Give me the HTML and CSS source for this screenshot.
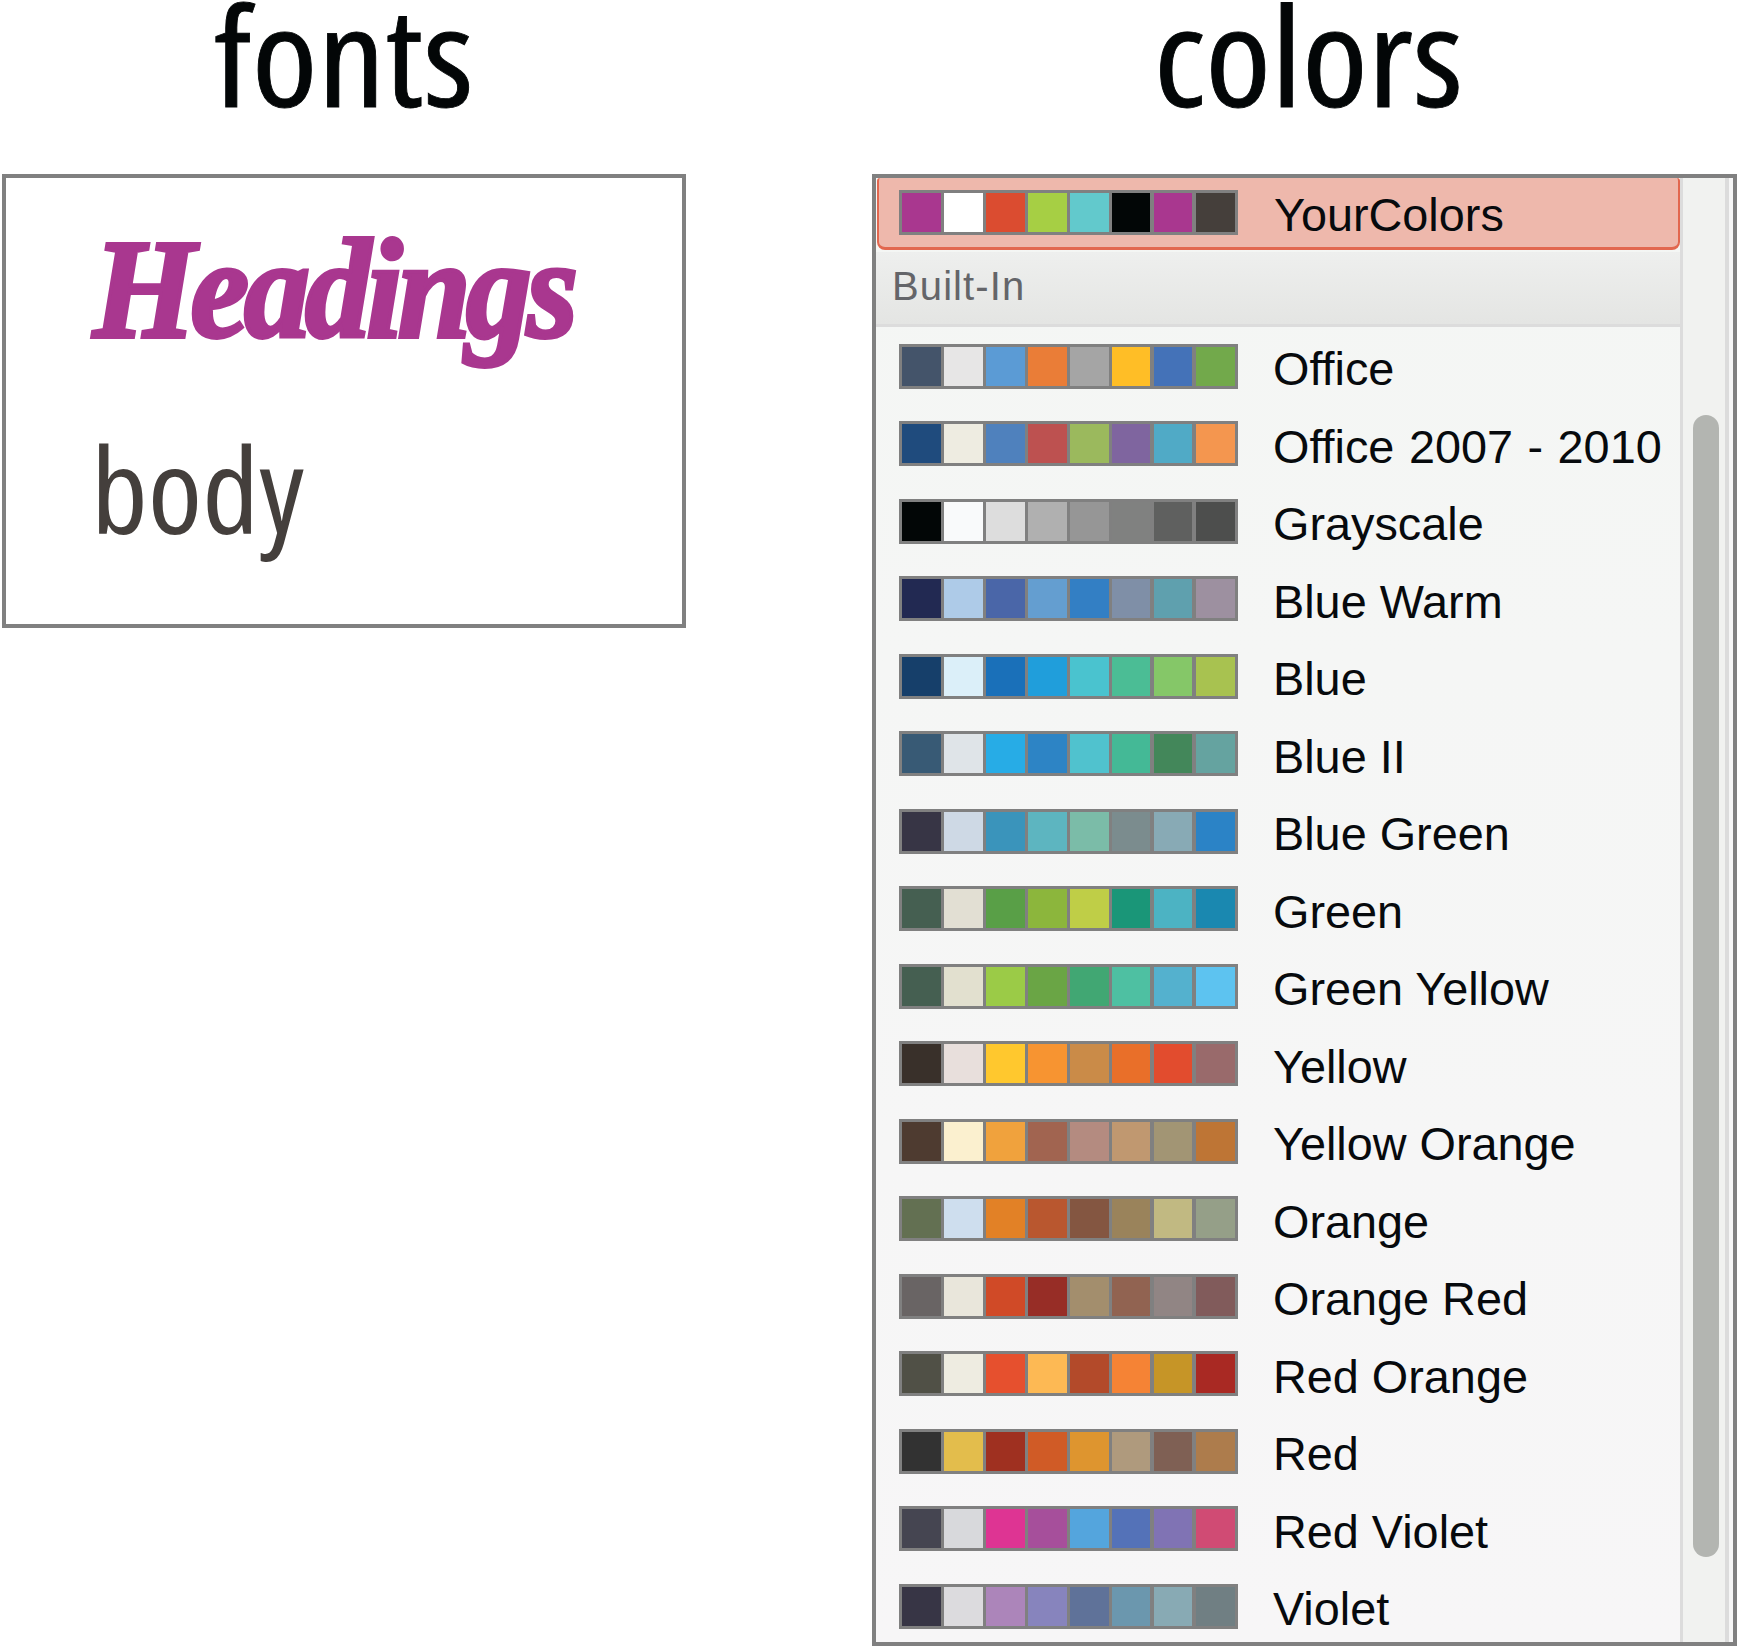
FILE: index.html
```html
<!DOCTYPE html>
<html lang="en">
<head>
<meta charset="utf-8">
<title>fonts and colors</title>
<link rel="stylesheet" href="styles.css">
</head>
<body>
<main class="page">
  <section class="col col-fonts">
    <h1 class="title title-fonts">fonts</h1>
    <div class="font-box">
      <div class="sample-head">Headings</div>
      <div class="sample-body">body</div>
    </div>
  </section>
  <section class="col col-colors">
    <div class="title-wrap"><h1 class="title title-colors">colors</h1></div>
    <div class="panel">
      <div class="list">
        <div class="row row-selected"><div class="strip"><i style="background:#a9378f"></i><i style="background:#ffffff"></i><i style="background:#db4c30"></i><i style="background:#a6cf44"></i><i style="background:#62c9cc"></i><i style="background:#020606"></i><i style="background:#a9378f"></i><i style="background:#453f3b"></i></div><span class="label">YourColors</span></div>
        <div class="group">Built-In</div>
        <div class="row"><div class="strip"><i style="background:#44546a"></i><i style="background:#e7e6e6"></i><i style="background:#5b9bd5"></i><i style="background:#ea7d37"></i><i style="background:#a5a5a5"></i><i style="background:#ffbe26"></i><i style="background:#4472b8"></i><i style="background:#72a94b"></i></div><span class="label">Office</span></div>
        <div class="row"><div class="strip"><i style="background:#1f4b7d"></i><i style="background:#eeece1"></i><i style="background:#4f81bd"></i><i style="background:#bd5150"></i><i style="background:#9bb95d"></i><i style="background:#7f659f"></i><i style="background:#50aac6"></i><i style="background:#f4964f"></i></div><span class="label label-wide">Office 2007 - 2010</span></div>
        <div class="row"><div class="strip"><i style="background:#020606"></i><i style="background:#f9fafb"></i><i style="background:#dddddd"></i><i style="background:#b0b0b0"></i><i style="background:#969696"></i><i style="background:#808180"></i><i style="background:#5f605f"></i><i style="background:#4d4e4d"></i></div><span class="label">Grayscale</span></div>
        <div class="row"><div class="strip"><i style="background:#222952"></i><i style="background:#aecbe8"></i><i style="background:#4a66a8"></i><i style="background:#649ed0"></i><i style="background:#337fc4"></i><i style="background:#7f8fa7"></i><i style="background:#5fa0ae"></i><i style="background:#9d90a0"></i></div><span class="label">Blue Warm</span></div>
        <div class="row"><div class="strip"><i style="background:#163f6a"></i><i style="background:#dbeff9"></i><i style="background:#1a70b9"></i><i style="background:#209edb"></i><i style="background:#4ac3cf"></i><i style="background:#4bbd95"></i><i style="background:#85c768"></i><i style="background:#a8c250"></i></div><span class="label">Blue</span></div>
        <div class="row"><div class="strip"><i style="background:#385a75"></i><i style="background:#dfe4e8"></i><i style="background:#27ace6"></i><i style="background:#2d84c5"></i><i style="background:#50c2ce"></i><i style="background:#44b996"></i><i style="background:#43875a"></i><i style="background:#65a3a0"></i></div><span class="label">Blue II</span></div>
        <div class="row"><div class="strip"><i style="background:#373545"></i><i style="background:#ced9e5"></i><i style="background:#3a94bb"></i><i style="background:#5db5c0"></i><i style="background:#7bbca8"></i><i style="background:#7b8c8e"></i><i style="background:#88aab5"></i><i style="background:#2b83c6"></i></div><span class="label">Blue Green</span></div>
        <div class="row"><div class="strip"><i style="background:#455f51"></i><i style="background:#e2dfd3"></i><i style="background:#599f47"></i><i style="background:#8cb63c"></i><i style="background:#bfce47"></i><i style="background:#1a9678"></i><i style="background:#4cb3c3"></i><i style="background:#1a88b0"></i></div><span class="label">Green</span></div>
        <div class="row"><div class="strip"><i style="background:#455f51"></i><i style="background:#e2e0cf"></i><i style="background:#9bcb47"></i><i style="background:#6aa545"></i><i style="background:#41a773"></i><i style="background:#4ec0a2"></i><i style="background:#54b1ce"></i><i style="background:#5dc3f0"></i></div><span class="label">Green Yellow</span></div>
        <div class="row"><div class="strip"><i style="background:#39302a"></i><i style="background:#e8dfdc"></i><i style="background:#ffc82e"></i><i style="background:#f79431"></i><i style="background:#ca8b48"></i><i style="background:#e96f29"></i><i style="background:#e24c2e"></i><i style="background:#996a6b"></i></div><span class="label">Yellow</span></div>
        <div class="row"><div class="strip"><i style="background:#4e3b30"></i><i style="background:#fbf0cf"></i><i style="background:#f0a23d"></i><i style="background:#a16450"></i><i style="background:#b48b80"></i><i style="background:#c09870"></i><i style="background:#a29574"></i><i style="background:#be7535"></i></div><span class="label">Yellow Orange</span></div>
        <div class="row"><div class="strip"><i style="background:#637052"></i><i style="background:#cedeee"></i><i style="background:#e28126"></i><i style="background:#b9572f"></i><i style="background:#845641"></i><i style="background:#9a835b"></i><i style="background:#c1b982"></i><i style="background:#959f88"></i></div><span class="label">Orange</span></div>
        <div class="row"><div class="strip"><i style="background:#696464"></i><i style="background:#e9e6db"></i><i style="background:#d04a27"></i><i style="background:#972d26"></i><i style="background:#a38e6d"></i><i style="background:#916351"></i><i style="background:#918584"></i><i style="background:#815b5b"></i></div><span class="label">Orange Red</span></div>
        <div class="row"><div class="strip"><i style="background:#505046"></i><i style="background:#eeece1"></i><i style="background:#e6502e"></i><i style="background:#fdb954"></i><i style="background:#b34a2a"></i><i style="background:#f58335"></i><i style="background:#c69527"></i><i style="background:#a92923"></i></div><span class="label">Red Orange</span></div>
        <div class="row"><div class="strip"><i style="background:#323232"></i><i style="background:#e3bd4c"></i><i style="background:#9f3020"></i><i style="background:#d05b26"></i><i style="background:#de952f"></i><i style="background:#af9a7d"></i><i style="background:#7f6054"></i><i style="background:#ad7c4c"></i></div><span class="label">Red</span></div>
        <div class="row"><div class="strip"><i style="background:#454551"></i><i style="background:#d8d9dc"></i><i style="background:#de3493"></i><i style="background:#a64f9b"></i><i style="background:#54a5dd"></i><i style="background:#5472b8"></i><i style="background:#8073b4"></i><i style="background:#d04b74"></i></div><span class="label">Red Violet</span></div>
        <div class="row"><div class="strip"><i style="background:#373545"></i><i style="background:#dcdbde"></i><i style="background:#ac85ba"></i><i style="background:#8784bd"></i><i style="background:#5f7299"></i><i style="background:#6b97ae"></i><i style="background:#88aab4"></i><i style="background:#707f83"></i></div><span class="label">Violet</span></div>
      </div>
      <div class="scrollbar"><div class="thumb"></div></div>
    </div>
  </section>
</main>
</body>
</html>
```
FILE: styles.css
```css
* { box-sizing: border-box; }
html, body { margin: 0; padding: 0; background: #fff; }
body { width: 1737px; height: 1646px; overflow: hidden; }
.page { display: flex; height: 1646px; }
.col { display: flex; flex-direction: column; }
.col-fonts { width: 872px; padding-left: 2px; }
.col-colors { width: 865px; }
.title-wrap { padding-left: 8px; }
.title {
  margin: 0;
  height: 174px;
  font-family: "Liberation Sans Narrow", "Open Sans", sans-serif;
  font-stretch: condensed;
  font-weight: 400;
  font-size: 138px;
  line-height: 106px;
  color: #030607;
  -webkit-text-stroke: 0.8px #030607;
  text-align: center;
  transform: scaleX(1.085);
}
.title-fonts { width: 684px; }
.font-box {
  width: 684px;
  height: 454px;
  border: 4px solid #808080;
  padding: 36px 0 0 87px;
  background: #fff;
}
.sample-head {
  font-family: "Liberation Serif", serif;
  font-weight: 700;
  font-style: italic;
  font-size: 142px;
  line-height: 150px;
  letter-spacing: -5.5px;
  color: #a9378f;
  -webkit-text-stroke: 4px #a9378f;
  transform: scaleX(0.93);
  transform-origin: left center;
}
.sample-body {
  margin-top: 65px;
  margin-left: -2px;
  font-family: "Liberation Sans Narrow", "Open Sans", sans-serif;
  font-stretch: condensed;
  font-size: 118px;
  line-height: 120px;
  color: #443f3c;
  transform: scaleX(1.05);
  transform-origin: left center;
}
.panel {
  display: flex;
  height: 1472px;
  border: 4px solid #808080;
  background: linear-gradient(180deg, #f4f6f4, #f7f6f7);
}
.list {
  width: 807px;
  flex: none;
  border-right: 3px solid #dcdcdc;
  overflow: hidden;
  font-family: "Liberation Sans", Arial, sans-serif;
}
.row {
  display: flex;
  align-items: center;
  height: 77.5px;
  padding-left: 23px;
  font-size: 46.8px;
  color: #070a0d;
}
.row-selected {
  height: 72px;
  background: #eeb8ac;
  border: solid #e2674f;
  border-width: 0 2px 3px 2px;
  border-radius: 3px 3px 8px 8px;
  padding-left: 20px;
  padding-bottom: 1px;
  margin-left: 1px;
}
.group {
  height: 75px;
  margin-top: 2px;
  margin-bottom: 0.5px;
  padding: 12px 0 0 16px;
  border-bottom: 3px solid #dcdcdc;
  background: linear-gradient(180deg, #eeefee, #e4e5e3);
  font-size: 40px;
  line-height: 44px;
  letter-spacing: 1.1px;
  color: #646569;
}
.strip {
  display: flex;
  gap: 3px;
  flex: none;
  width: 339px;
  height: 45px;
  padding: 3px 4px 3px 3px;
  background: #808080;
}
.strip i { display: block; width: 39px; height: 39px; flex: none; }
.strip i:nth-child(6), .strip i:nth-child(7) { width: 38px; margin-right: 1px; }
.label { margin-left: 35px; padding-top: 6px; line-height: 50px; white-space: nowrap; }
.row-selected .label { margin-left: 36px; padding-top: 5px; }
.label-wide { word-spacing: 1.5px; }
.scrollbar {
  flex: none;
  width: 50px;
  padding: 237px 0 0 10px;
  background: linear-gradient(90deg, #f1f2f0 0, #f1f2f0 42px, #dcdcdc 42px, #dcdcdc 46px, #f6f6f6 46px);
}
.thumb {
  width: 26px;
  height: 1142px;
  border-radius: 13px;
  background: #b3b5b1;
}
```
